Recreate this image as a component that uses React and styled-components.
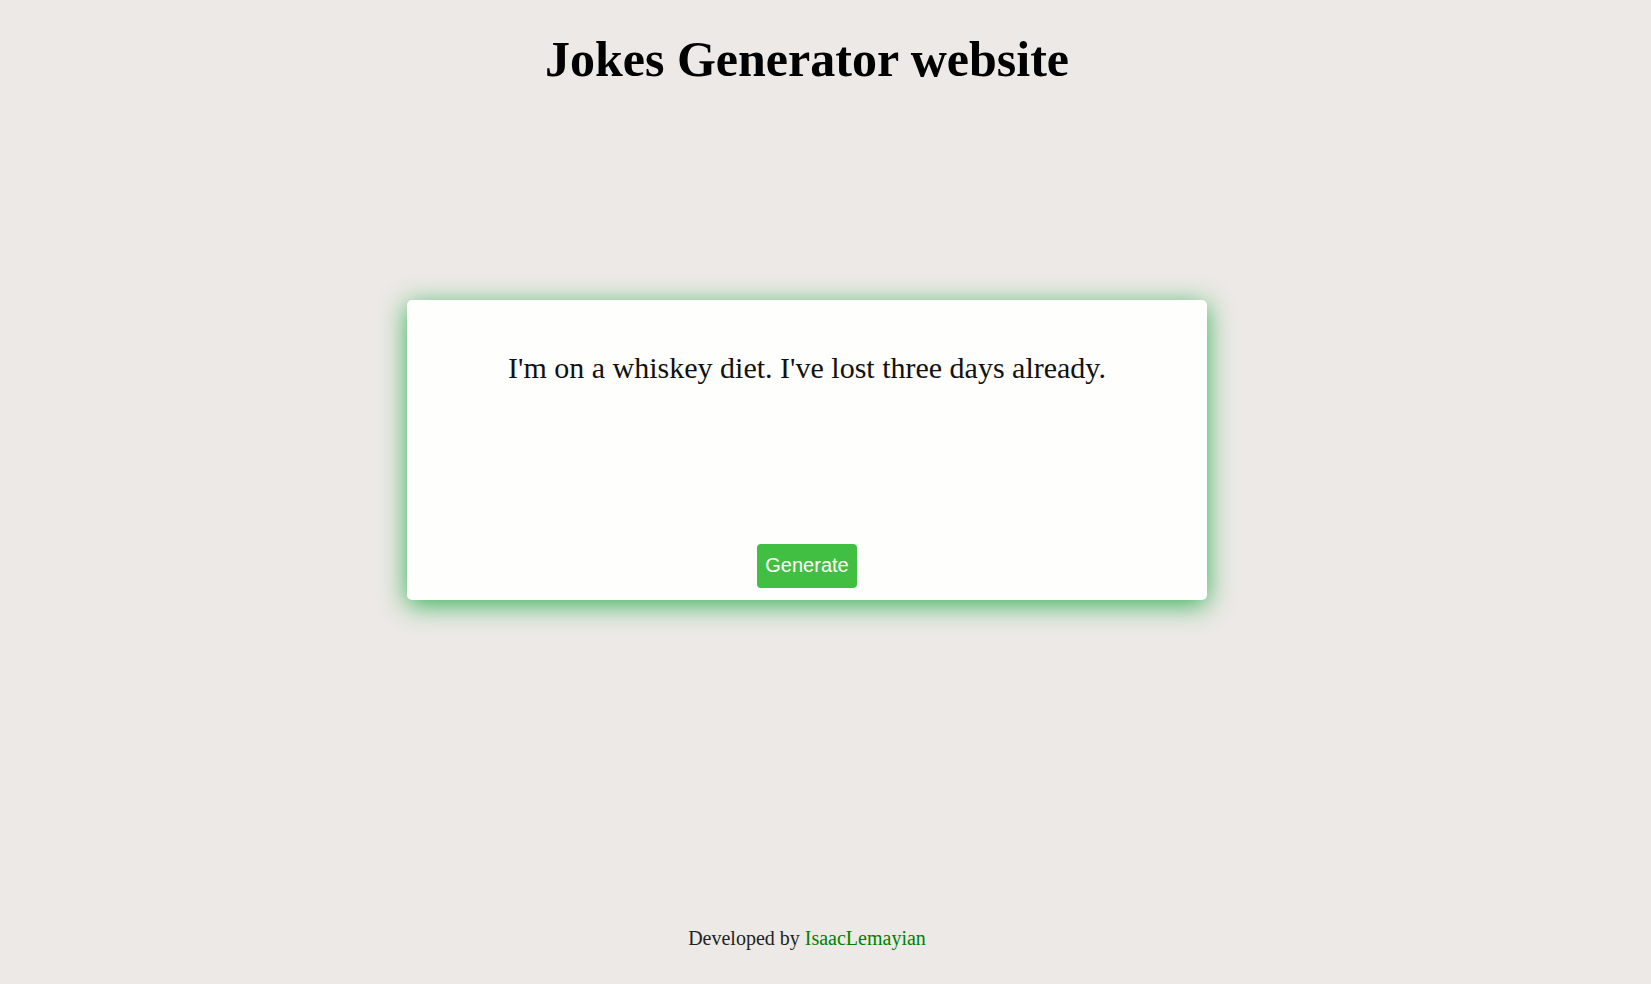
import React from "react";
import styled, { createGlobalStyle } from "styled-components";

const Global = createGlobalStyle`
  html, body { margin: 0; padding: 0; background: #ece9e6; }
  body { font-family: "Liberation Serif", "Times New Roman", serif; color: #111; }
`;

const Page = styled.div`
  width: calc(100% - 37px);
  min-height: 984px;
  display: flex;
  flex-direction: column;
  align-items: center;
  box-sizing: border-box;
`;

const Title = styled.h1`
  margin: 31px 0 0;
  font-size: 50px;
  font-weight: bold;
  line-height: 1.15;
  color: #000;
`;

const Card = styled.div`
  margin-top: 211px;
  width: 800px;
  height: 300px;
  box-sizing: border-box;
  background: #fefefc;
  border-radius: 5px;
  box-shadow: 0 5px 26px rgba(45, 175, 80, 0.95);
  display: flex;
  flex-direction: column;
  align-items: center;
  justify-content: space-between;
  padding: 51px 20px 12px;
`;

const Joke = styled.p`
  margin: 0;
  font-size: 30px;
  text-align: center;
  color: #111;
`;

const Button = styled.button`
  width: 100px;
  height: 44px;
  border: none;
  border-radius: 4px;
  background: #41bf42;
  color: #fff;
  font-family: "Liberation Sans", Arial, sans-serif;
  font-size: 20px;
  cursor: pointer;
`;

const Footer = styled.footer`
  margin-top: auto;
  margin-bottom: 34px;
  font-size: 20px;
  color: #222;
`;

const Link = styled.a`
  color: #008000;
  text-decoration: none;
`;

export default function App() {
  return (
    <>
      <Global />
      <Page>
        <Title>Jokes Generator website</Title>
        <Card>
          <Joke>I'm on a whiskey diet. I've lost three days already.</Joke>
          <Button>Generate</Button>
        </Card>
        <Footer>
          Developed by <Link href="#">IsaacLemayian</Link>
        </Footer>
      </Page>
    </>
  );
}
